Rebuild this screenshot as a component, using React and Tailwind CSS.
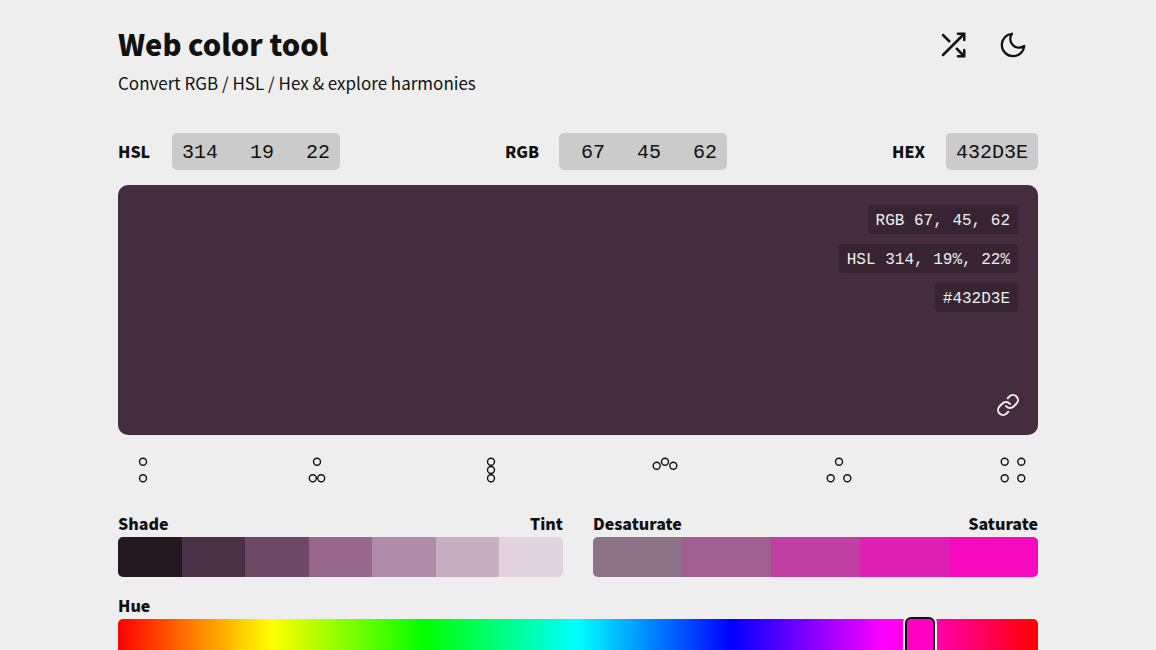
import { useState } from "react";

const inputClass =
  "w-14 bg-transparent px-2.5 pt-0.5 text-right font-['Liberation_Mono',monospace] text-xl leading-[35px] outline-none";

const groupLabel = "w-[54px] pb-0.5 text-base leading-6 font-black";

function ValueGroup({ name, channels }) {
  return (
    <div role="group" aria-label={`${name} values`} className="flex items-center">
      <span className={groupLabel}>{name}</span>
      <div className="flex rounded-[5px] bg-[#cbcbcb]">
        {channels.map(([label, value]) => (
          <input key={label} aria-label={label} defaultValue={value} className={inputClass} />
        ))}
      </div>
    </div>
  );
}

const harmonies = [
  ["Complementary", [[25, 16.7], [25, 33.3]]],
  ["Split complementary", [[25, 16.7], [20.8, 33.3], [29.2, 33.3]]],
  ["Monochromatic", [[25, 16.7], [25, 25], [25, 33.3]]],
  ["Analogous", [[16.7, 20.8], [25, 16.7], [33.3, 20.8]]],
  ["Triadic", [[25, 16.7], [16.7, 33.3], [33.3, 33.3]]],
  ["Tetradic", [[16.7, 16.7], [33.3, 16.7], [16.7, 33.3], [33.3, 33.3]]],
];

const shades = ["bg-[#241821]", "bg-[#483144]", "bg-[#6c4a65]", "bg-[#98678c]", "bg-[#b08ca8]", "bg-[#c8b0c3]", "bg-[#e1d4df]"];
const saturations = ["bg-[#8c7287]", "bg-[#a05f90]", "bg-[#c03fa3]", "bg-[#df20b3]", "bg-[#f50abd]"];

function Scale({ from, to, colors }) {
  return (
    <section className="min-w-0 flex-1">
      <div className="flex justify-between text-base leading-7 font-black">
        <h2>{from}</h2>
        <h2>{to}</h2>
      </div>
      <div className="flex h-10 overflow-hidden rounded-[5px]">
        {colors.map((color) => (
          <button key={color} type="button" aria-label={`${from} to ${to} swatch`} className={`flex-1 ${color}`} />
        ))}
      </div>
    </section>
  );
}

const badge =
  "rounded bg-[#362432] px-2 pt-[3px] font-['Liberation_Mono',monospace] text-base leading-[26px] text-[#eeeeee]";

const iconButton = "flex h-[50px] w-[50px] items-center justify-center";

export default function App() {
  const [hue, setHue] = useState(314);
  return (
    <div className="h-screen overflow-hidden bg-[#eeeeee] font-['Noto_Sans_CJK_SC',sans-serif] text-[#111111]">
      <main className="mx-auto max-w-[960px] px-5 pt-5">
        <header className="flex items-start justify-between">
          <div>
            <h1 className="text-[29px] leading-[46px] font-black">Web color tool</h1>
            <p className="text-[17px] leading-[34px]">Convert RGB / HSL / Hex &amp; explore harmonies</p>
          </div>
          <div className="flex gap-2.5">
            <button type="button" aria-label="Random color" className={iconButton}>
              <svg viewBox="0 0 24 24" className="h-[30px] w-[30px]" fill="none" stroke="currentColor" strokeWidth="2" strokeLinecap="round">
                <path d="M16 3h5v5M4 20L21 3M21 16v5h-5M15 15l6 6M4 4l5 5" />
              </svg>
            </button>
            <button type="button" aria-label="Dark mode" className={iconButton}>
              <svg viewBox="0 0 24 24" className="h-[30px] w-[30px]" fill="none" stroke="currentColor" strokeWidth="1.8" strokeLinecap="round" strokeLinejoin="round">
                <path d="M21 12.79A9 9 0 1 1 11.21 3 7 7 0 0 0 21 12.79z" />
              </svg>
            </button>
          </div>
        </header>

        <div className="mt-[33px] flex items-center justify-between">
          <ValueGroup name="HSL" channels={[["Hue", "314"], ["Saturation", "19"], ["Lightness", "22"]]} />
          <ValueGroup name="RGB" channels={[["Red", "67"], ["Green", "45"], ["Blue", "62"]]} />
          <label className="flex items-center">
            <span className={groupLabel}>HEX</span>
            <input
              defaultValue="432D3E"
              className="w-[92px] rounded-[5px] bg-[#cbcbcb] px-2.5 pt-0.5 font-['Liberation_Mono',monospace] text-xl leading-[35px] outline-none"
            />
          </label>
        </div>

        <section className="mt-[15px] flex h-[250px] flex-col items-end justify-between rounded-[10px] bg-[#432d3e] pt-5 pr-[18px] pb-[18px] pl-5">
          <div className="mr-0.5 flex flex-col items-end gap-2.5">
            <button type="button" className={badge}>RGB 67, 45, 62</button>
            <button type="button" className={badge}>HSL 314, 19%, 22%</button>
            <button type="button" className={badge}>#432D3E</button>
          </div>
          <button type="button" aria-label="Copy link" className="text-[#eeeeee]">
            <svg viewBox="0 0 24 24" className="h-6 w-6" fill="none" stroke="currentColor" strokeWidth="2" strokeLinecap="round" strokeLinejoin="round">
              <path d="M10 13a5 5 0 0 0 7.54.54l3-3a5 5 0 0 0-7.07-7.07l-1.72 1.71M14 11a5 5 0 0 0-7.54-.54l-3 3a5 5 0 0 0 7.07 7.07l1.71-1.71" />
            </svg>
          </button>
        </section>

        <div className="mt-2.5 flex justify-between">
          {harmonies.map(([name, points]) => (
            <button key={name} type="button" aria-label={name} className={iconButton}>
              <svg viewBox="0 0 50 50" className="h-[50px] w-[50px]" fill="none" stroke="currentColor" strokeWidth="1.4">
                {points.map(([x, y]) => (
                  <circle key={`${x}-${y}`} cx={x} cy={y} r="3.5" />
                ))}
              </svg>
            </button>
          ))}
        </div>

        <div className="mt-3.5 flex gap-[30px]">
          <Scale from="Shade" to="Tint" colors={shades} />
          <Scale from="Desaturate" to="Saturate" colors={saturations} />
        </div>

        <label htmlFor="hue" className="mt-3.5 block text-base leading-7 font-black">Hue</label>
        <div className="rounded-[5px] bg-[linear-gradient(to_right,#f00,#ff0,#0f0,#0ff,#00f,#f0f,#f00)]">
          <input
            id="hue"
            type="range"
            min="0"
            max="360"
            value={hue}
            onChange={(event) => setHue(Number(event.target.value))}
            className="-mx-[15px] block h-10 w-[calc(100%+30px)] appearance-none bg-transparent [&::-webkit-slider-thumb]:h-11 [&::-webkit-slider-thumb]:w-[30px] [&::-webkit-slider-thumb]:appearance-none [&::-webkit-slider-thumb]:rounded-[6px] [&::-webkit-slider-thumb]:border-2 [&::-webkit-slider-thumb]:border-[#111111] [&::-webkit-slider-thumb]:bg-[#ff00c4] [&::-webkit-slider-thumb]:shadow-[0_0_0_2px_#eeeeee]"
          />
        </div>
      </main>
    </div>
  );
}
